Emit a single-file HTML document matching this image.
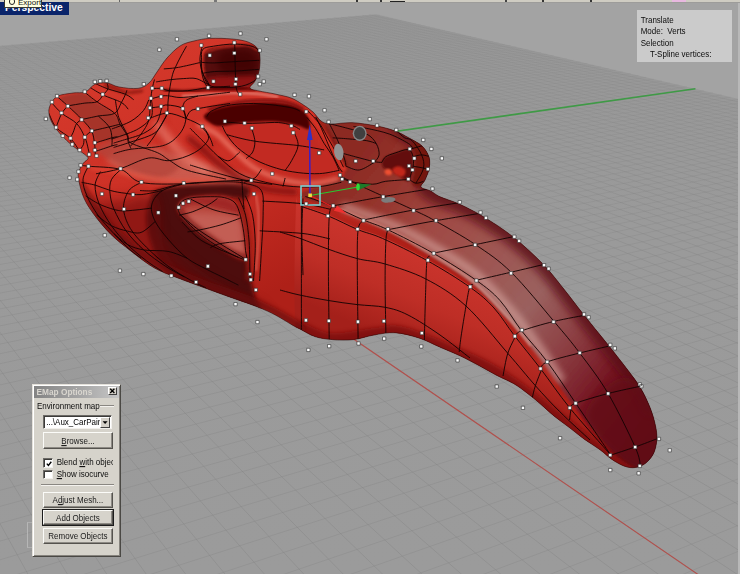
<!DOCTYPE html>
<html><head><meta charset="utf-8"><title>Perspective</title>
<style>
html,body{margin:0;padding:0;background:#a2a2a2;}
body{width:740px;height:574px;overflow:hidden;position:relative;font-family:"Liberation Sans",sans-serif;}
svg{position:absolute;left:0;top:0;display:block}
.abs{position:absolute}
</style></head><body>
<svg width="740" height="574" viewBox="0 0 740 574">
<defs>
<linearGradient id="gplane" x1="0" y1="0" x2="0" y2="574" gradientUnits="userSpaceOnUse">
<stop offset="0.02" stop-color="#979797"/><stop offset="0.4" stop-color="#9a9a9a"/><stop offset="1" stop-color="#9b9b9b"/></linearGradient>
<linearGradient id="gbase" x1="60" y1="60" x2="200" y2="330" gradientUnits="userSpaceOnUse">
<stop offset="0" stop-color="#d63a2c"/><stop offset="0.6" stop-color="#ca2e24"/><stop offset="1" stop-color="#ae2018"/></linearGradient>
<linearGradient id="gline" x1="0" y1="14" x2="0" y2="330" gradientUnits="userSpaceOnUse"><stop offset="0" stop-color="#808080" stop-opacity="0.5"/><stop offset="0.5" stop-color="#808080" stop-opacity="0.8"/><stop offset="1" stop-color="#808080" stop-opacity="1"/></linearGradient>
<linearGradient id="gside" x1="440" y1="262" x2="405" y2="345" gradientUnits="userSpaceOnUse"><stop offset="0" stop-color="#ca342c"/><stop offset="0.5" stop-color="#be2e26"/><stop offset="1" stop-color="#a4201a"/></linearGradient>
<linearGradient id="gdeck" x1="330" y1="190" x2="655" y2="450" gradientUnits="userSpaceOnUse">
<stop offset="0" stop-color="#8c2a24"/><stop offset="0.12" stop-color="#96362e"/><stop offset="0.25" stop-color="#a04a44"/><stop offset="0.4" stop-color="#9e5652"/><stop offset="0.55" stop-color="#9a605e"/><stop offset="0.68" stop-color="#8c3e42"/><stop offset="0.8" stop-color="#761824"/><stop offset="1" stop-color="#5e0814"/></linearGradient>
<filter id="b1" x="-20%" y="-20%" width="140%" height="140%"><feGaussianBlur stdDeviation="1"/></filter>
<filter id="b3" x="-20%" y="-20%" width="140%" height="140%"><feGaussianBlur stdDeviation="3"/></filter>
<filter id="b6" x="-30%" y="-30%" width="160%" height="160%"><feGaussianBlur stdDeviation="6"/></filter>
<filter id="b2" x="-20%" y="-20%" width="140%" height="140%"><feGaussianBlur stdDeviation="2"/></filter>
<filter id="b4" x="-20%" y="-20%" width="140%" height="140%"><feGaussianBlur stdDeviation="4"/></filter>
<clipPath id="carclip"><path d="M57.0 96.5 C60.9 94.2 68.3 93.8 73.0 93.0 C77.7 92.2 81.7 93.5 85.4 92.0 C89.1 90.5 91.4 85.8 95.0 84.3 C98.6 82.8 103.0 82.5 107.0 83.0 C111.0 83.5 113.8 86.1 119.0 87.0 C124.2 87.9 133.0 89.1 138.0 88.4 C143.0 87.7 145.8 85.7 149.0 83.0 C152.2 80.3 154.0 76.2 157.0 72.0 C160.0 67.8 163.1 62.4 167.0 58.0 C170.9 53.6 176.0 48.5 180.5 45.7 C185.0 42.9 189.1 42.2 194.0 41.0 C198.9 39.8 203.7 38.7 210.0 38.4 C216.3 38.1 225.7 38.4 232.0 39.0 C238.3 39.6 243.8 40.4 248.0 42.0 C252.2 43.6 255.5 45.7 257.5 48.4 C259.5 51.1 259.8 54.2 260.0 58.0 C260.2 61.8 259.8 67.2 259.0 71.0 C258.2 74.8 256.5 78.2 255.0 81.0 C253.5 83.8 249.3 86.3 250.0 88.0 C250.7 89.7 254.8 90.0 259.0 91.0 C263.2 92.0 269.7 92.8 275.0 94.0 C280.3 95.2 286.5 96.3 291.0 98.0 C295.5 99.7 298.3 101.7 302.0 104.0 C305.7 106.3 309.8 109.2 313.0 112.0 C316.2 114.8 318.1 119.0 321.0 121.0 C323.9 123.0 325.3 123.7 330.5 124.0 C335.7 124.3 344.3 122.4 352.0 122.7 C359.7 123.0 369.3 124.6 376.5 126.0 C383.7 127.4 389.6 129.0 395.0 131.0 C400.4 133.0 404.5 135.5 409.0 138.0 C413.5 140.5 418.7 142.8 422.0 146.0 C425.3 149.2 427.8 153.2 429.0 157.0 C430.2 160.8 429.7 165.2 429.0 169.0 C428.3 172.8 426.3 177.0 425.0 180.0 C423.7 183.0 420.1 185.2 421.0 187.0 C421.9 188.8 427.3 189.4 430.5 191.0 C433.7 192.6 435.2 194.6 440.0 196.8 C444.8 199.0 451.8 200.7 459.0 204.0 C466.2 207.3 474.0 211.0 483.0 216.5 C492.0 222.0 503.1 228.9 513.0 236.8 C523.0 244.7 534.4 255.3 542.7 263.8 C551.0 272.3 556.3 279.7 563.0 288.0 C569.7 296.3 575.7 304.6 583.0 313.8 C590.3 323.1 599.7 334.3 607.0 343.5 C614.3 352.7 621.4 361.6 627.0 369.0 C632.6 376.4 636.7 381.6 640.5 388.0 C644.3 394.4 647.5 401.3 650.0 407.5 C652.5 413.7 654.3 420.1 655.4 425.4 C656.5 430.6 657.0 434.5 656.8 439.0 C656.6 443.5 655.6 448.6 654.0 452.4 C652.4 456.2 649.7 459.6 647.0 462.0 C644.3 464.4 641.3 466.2 638.0 467.0 C634.7 467.8 631.1 468.1 627.0 467.0 C622.9 465.9 618.0 463.4 613.5 460.5 C609.0 457.6 604.9 453.3 600.0 449.7 C595.1 446.1 589.0 442.6 584.0 439.0 C579.0 435.4 575.0 431.8 570.0 428.0 C565.0 424.2 558.9 420.0 554.0 416.0 C549.1 412.0 545.0 407.8 540.5 404.0 C536.0 400.2 531.5 396.4 527.0 393.0 C522.5 389.6 518.7 386.5 513.5 383.5 C508.3 380.5 501.9 378.1 496.0 375.0 C490.1 371.9 483.9 368.2 478.0 365.0 C472.1 361.8 466.9 359.0 460.5 356.0 C454.1 353.0 446.6 350.0 439.7 347.0 C432.8 344.0 426.4 340.4 419.0 338.0 C411.6 335.6 402.5 333.2 395.0 332.7 C387.5 332.2 380.9 333.9 374.0 335.0 C367.1 336.1 360.4 338.8 353.5 339.6 C346.6 340.4 339.1 340.1 332.7 339.6 C326.3 339.1 320.4 338.4 315.0 336.6 C309.6 334.8 303.7 330.9 300.0 329.0 C296.3 327.1 297.6 328.0 293.0 325.4 C288.4 322.8 279.5 317.0 272.7 313.6 C265.9 310.2 259.7 307.8 252.4 305.0 C245.1 302.2 236.7 299.5 228.8 296.7 C220.9 293.9 213.5 291.1 205.0 288.0 C196.5 284.9 186.4 281.3 178.0 278.0 C169.6 274.7 162.4 272.5 154.5 268.0 C146.6 263.5 138.1 256.7 130.8 251.0 C123.5 245.3 116.7 240.2 110.5 234.0 C104.3 227.8 98.1 220.2 93.6 214.0 C89.1 207.8 86.0 203.0 83.5 197.0 C81.0 191.0 79.1 182.5 78.4 178.0 C77.7 173.5 78.7 172.5 79.5 170.0 C80.3 167.5 82.1 164.9 83.5 163.0 C84.9 161.1 87.8 160.0 88.0 158.6 C88.2 157.2 87.9 157.0 85.0 154.6 C82.1 152.2 75.2 148.1 70.5 144.0 C65.8 139.9 60.4 134.3 57.0 130.0 C53.6 125.7 51.2 121.8 50.0 118.0 C48.8 114.2 48.3 110.6 49.5 107.0 C50.7 103.4 53.1 98.8 57.0 96.5Z"/></clipPath>
</defs>
<rect width="740" height="574" fill="#a3a3a3"/>
<path d="M375.9 14.2 L750.0 101.5 L750 600 L-10 600 L-10.0 46.5Z" fill="url(#gplane)"/>
<path d="M-755.9 111.1L380.0 15.1M-759.2 113.5L384.3 16.1M-762.6 115.9L388.6 17.2M-766.1 118.4L393.0 18.2M-769.6 121.0L397.5 19.2M-773.1 123.6L402.0 20.3M-776.8 126.2L406.6 21.4M-780.5 128.9L411.2 22.4M-784.2 131.6L415.9 23.5M-788.1 134.4L420.6 24.6M-792.0 137.3L425.4 25.7M-796.0 140.2L430.2 26.9M-800.1 143.1L435.1 28.0M-804.2 146.1L440.1 29.2M-808.4 149.2L445.1 30.3M-812.8 152.4L450.2 31.5M-817.2 155.6L455.4 32.7M-821.7 158.8L460.6 34.0M-826.2 162.2L465.8 35.2M-830.9 165.6L471.2 36.4M-835.7 169.0L476.6 37.7M-840.6 172.6L482.1 39.0M-845.6 176.2L487.6 40.3M-850.7 179.9L493.2 41.6M-855.9 183.7L498.9 42.9M-861.3 187.6L504.7 44.3M-866.7 191.6L510.6 45.6M-872.3 195.6L516.5 47.0M-878.0 199.8L522.5 48.4M-883.8 204.0L528.6 49.8M-889.8 208.4L534.7 51.3M-895.9 212.8L541.0 52.7M-902.2 217.4L547.3 54.2M-908.6 222.0L553.8 55.7M-915.2 226.8L560.3 57.2M-922.0 231.7L566.9 58.8M-928.9 236.8L573.6 60.3M-936.0 241.9L580.4 61.9M-943.3 247.2L587.3 63.5M-950.8 252.7L594.3 65.2M-958.5 258.2L601.4 66.8M-966.4 264.0L608.6 68.5M-974.5 269.9L615.9 70.2M-982.8 275.9L623.3 71.9M-991.4 282.2L630.8 73.7M-1000.2 288.6L638.5 75.5M-1009.3 295.2L646.2 77.3M-1018.7 302.0L654.1 79.1M-1028.3 309.0L662.1 81.0M-1038.3 316.2L670.2 82.9M-1048.5 323.7L678.5 84.8M-1059.1 331.3L686.9 86.8M-1070.0 339.3L695.4 88.8M-1081.3 347.5L704.0 90.8M-1092.9 355.9L712.8 92.8M-1104.9 364.7L721.8 94.9M-1117.4 373.7L730.8 97.1M-1130.2 383.1L740.1 99.2M-1143.6 392.7L749.5 101.4M-1157.4 402.8L759.0 103.6M-1171.7 413.2L768.7 105.9M-1186.6 424.0L778.6 108.2M-1202.0 435.2L788.7 110.6M-1218.1 446.9L798.9 112.9M-1234.7 459.0L809.3 115.4M-1252.1 471.6L819.9 117.8M-1270.1 484.7L830.7 120.4M-1289.0 498.4L841.6 122.9M-1308.6 512.7L852.8 125.5M-1329.1 527.6L864.2 128.2M-1350.6 543.2L875.8 130.9M-1373.0 559.5L887.6 133.7M-1396.5 576.5L899.7 136.5M-1421.1 594.4L911.9 139.3M-1447.0 613.2L924.4 142.3M-1474.2 633.0L937.2 145.2M-1502.8 653.7L950.2 148.3M-1532.9 675.6L963.5 151.4M-1564.7 698.7L977.0 154.5M-1598.3 723.1L990.8 157.7M-1633.8 749.0L1004.9 161.0M-1671.5 776.3L1019.3 164.4M-1711.5 805.4L1034.0 167.8M-1754.1 836.4L1049.0 171.3M-1799.5 869.4L1064.3 174.9M-1848.0 904.6L1080.0 178.6M-1899.9 942.3L1095.9 182.3M-1955.6 982.8L1112.3 186.1M-2015.6 1026.4L1129.0 190.0M-2080.3 1073.4L1146.1 194.0M-2150.4 1124.3L1163.6 198.1M-2226.5 1179.6L1181.5 202.3M-2309.4 1239.8L1199.8 206.5M-2400.0 1305.7L1218.5 210.9M-2499.7 1378.1L1237.7 215.4M-2609.7 1458.0L1257.4 220.0M-2731.7 1546.7L1277.6 224.7M-2867.8 1645.6L1298.2 229.5M-3020.7 1756.7L1319.4 234.5M-3193.6 1882.3L1341.1 239.5M-3390.7 2025.5L1363.4 244.7M-3617.5 2190.3L1386.2 250.1M-3881.2 2382.0L1409.7 255.5M-4191.7 2607.6L1433.8 261.2M-4562.7 2877.2L1458.5 266.9" stroke="url(#gline)" stroke-width="0.9" stroke-opacity="0.34" fill="none"/>
<path d="M-300.6 70.9L-4.6 942.9M-288.6 69.9L45.7 920.2M-276.6 68.9L94.0 898.5M-264.7 67.9L140.3 877.6M-252.9 66.9L184.9 857.5M-241.2 65.9L227.8 838.2M-229.7 64.9L269.0 819.6M-218.2 64.0L308.8 801.7M-206.8 63.0L347.1 784.4M-195.5 62.1L384.1 767.8M-184.4 61.1L419.8 751.7M-173.3 60.2L454.3 736.2M-162.3 59.3L487.6 721.1M-151.4 58.4L519.8 706.6M-140.6 57.5L551.0 692.6M-129.8 56.6L581.2 679.0M-119.2 55.7L610.4 665.8M-108.7 54.8L638.7 653.1M-98.2 53.9L666.2 640.7M-87.8 53.0L692.8 628.7M-77.5 52.2L718.7 617.0M-67.3 51.3L743.8 605.7M-57.2 50.5L768.1 594.7M-47.2 49.6L791.8 584.1M-37.2 48.8L814.8 573.7M-27.3 48.0L837.2 563.6M-17.5 47.2L859.0 553.8M-7.8 46.3L880.2 544.3M1.8 45.5L900.9 535.0M11.4 44.7L921.0 525.9M20.9 43.9L940.5 517.1M30.3 43.1L959.6 508.5M39.7 42.4L978.2 500.1M49.0 41.6L996.4 491.9M58.2 40.8L1014.1 484.0M67.3 40.0L1031.3 476.2M76.4 39.3L1048.2 468.6M85.4 38.5L1064.6 461.2M94.3 37.8L1080.7 453.9M103.2 37.0L1096.4 446.8M112.0 36.3L1111.8 439.9M120.7 35.6L1126.8 433.2M129.4 34.8L1141.4 426.6M138.0 34.1L1155.8 420.1M146.5 33.4L1169.8 413.8M155.0 32.7L1183.5 407.6M163.4 32.0L1196.9 401.6M171.7 31.3L1210.1 395.6M180.0 30.6L1223.0 389.8M188.3 29.9L1235.6 384.2M196.4 29.2L1247.9 378.6M204.5 28.5L1260.0 373.1M212.6 27.9L1271.9 367.8M220.6 27.2L1283.5 362.6M228.5 26.5L1294.9 357.4M236.4 25.9L1306.0 352.4M244.2 25.2L1317.0 347.5M252.0 24.6L1327.7 342.6M259.7 23.9L1338.3 337.9M267.4 23.3L1348.6 333.2M275.0 22.6L1358.7 328.6M282.5 22.0L1368.7 324.2M290.0 21.4L1378.5 319.8M297.5 20.8L1388.1 315.4M304.9 20.1L1397.5 311.2M312.2 19.5L1406.8 307.0M319.5 18.9L1415.9 302.9M326.8 18.3L1424.8 298.9M333.9 17.7L1433.6 294.9M341.1 17.1L1442.3 291.0M348.2 16.5L1450.7 287.2M355.2 15.9L1459.1 283.4M362.3 15.3L1467.3 279.7M369.2 14.7L1475.4 276.1" stroke="url(#gline)" stroke-width="0.9" stroke-opacity="0.42" fill="none"/>
<line x1="109.1" y1="172.0" x2="695.4" y2="88.8" stroke="#3f9a46" stroke-width="1.6"/>
<line x1="109.1" y1="172.0" x2="706.1" y2="580.0" stroke="#b2504c" stroke-width="1.1"/>
<g clip-path="url(#carclip)">
<rect x="40" y="30" width="630" height="450" fill="url(#gbase)"/>
<path d="M300.0 196.0 C301.8 199.5 318.5 202.9 328.7 206.8 C338.9 210.8 350.7 215.4 361.0 219.7 C371.3 224.0 378.9 226.8 390.3 232.7 C401.7 238.6 415.6 246.9 429.2 255.4 C442.8 263.9 459.2 272.9 472.2 283.5 C485.2 294.1 499.4 310.9 507.0 318.7 C514.6 326.5 511.5 323.1 517.6 330.5 C523.7 337.9 534.3 350.6 543.5 363.0 C552.7 375.4 564.1 393.5 572.7 405.0 C581.3 416.5 588.0 423.7 595.0 432.0 C602.0 440.3 607.5 448.7 615.0 455.0 C622.5 461.3 631.7 469.2 640.0 470.0 C648.3 470.8 660.8 468.3 665.0 460.0 C669.2 451.7 669.2 435.0 665.0 420.0 C660.8 405.0 650.8 386.7 640.0 370.0 C629.2 353.3 613.3 336.7 600.0 320.0 C586.7 303.3 575.0 285.8 560.0 270.0 C545.0 254.2 525.0 235.8 510.0 225.0 C495.0 214.2 481.7 210.8 470.0 205.0 C458.3 199.2 445.0 199.2 440.0 190.0 C435.0 180.8 443.3 160.0 440.0 150.0 C436.7 140.0 430.0 135.3 420.0 130.0 C410.0 124.7 395.3 120.0 380.0 118.0 C364.7 116.0 336.3 114.3 328.0 118.0 C319.7 121.7 328.7 133.0 330.0 140.0 C331.3 147.0 333.5 154.7 336.0 160.0 C338.5 165.3 344.7 168.7 345.0 172.0 C345.3 175.3 342.5 177.7 338.0 180.0 C333.5 182.3 324.3 183.3 318.0 186.0 C311.7 188.7 298.2 192.5 300.0 196.0Z" fill="url(#gdeck)" filter="url(#b1)" opacity="1" />
<path d="M400.0 128.0 C404.2 131.3 419.8 141.0 425.0 148.0 C430.2 155.0 431.0 163.7 431.0 170.0 C431.0 176.3 423.5 181.5 425.0 186.0 C426.5 190.5 434.3 193.8 440.0 196.8 C445.7 199.8 451.8 200.7 459.0 204.0 C466.2 207.3 474.0 211.0 483.0 216.5 C492.0 222.0 503.1 228.9 513.0 236.8 C523.0 244.7 534.4 255.3 542.7 263.8 C551.0 272.3 556.3 279.7 563.0 288.0 C569.7 296.3 575.7 304.6 583.0 313.8 C590.3 323.1 599.7 334.3 607.0 343.5 C614.3 352.7 621.4 361.6 627.0 369.0 C632.6 376.4 636.7 381.6 640.5 388.0 C644.3 394.4 648.4 404.2 650.0 407.5" fill="none" stroke="#5a0a14" stroke-width="18" stroke-linecap="round" filter="url(#b4)" opacity="0.8"/>
<path d="M345.0 207.0 C353.3 210.2 379.8 219.2 395.0 226.0 C410.2 232.8 422.2 239.7 436.0 248.0 C449.8 256.3 465.3 265.3 478.0 276.0 C490.7 286.7 502.0 300.3 512.0 312.0 C522.0 323.7 530.0 335.0 538.0 346.0 C546.0 357.0 556.3 372.7 560.0 378.0" fill="none" stroke="#d8a8a2" stroke-width="9" stroke-linecap="round" filter="url(#b3)" opacity="0.6"/>
<path d="M340.0 209.5 C348.3 213.0 374.8 223.2 390.0 230.5 C405.2 237.8 417.2 245.0 431.0 253.5 C444.8 262.0 460.5 271.2 473.0 281.5 C485.5 291.8 496.5 304.4 506.0 315.0 C515.5 325.6 526.0 340.0 530.0 345.0" fill="none" stroke="#e8a89c" stroke-width="2.5" stroke-linecap="round" filter="url(#b1)" opacity="0.55"/>
<path d="M585.0 415.0 C584.5 427.0 602.8 442.8 612.0 452.0 C621.2 461.2 631.2 468.7 640.0 470.0 C648.8 471.3 661.3 467.5 665.0 460.0 C668.7 452.5 666.2 437.5 662.0 425.0 C657.8 412.5 647.8 392.5 640.0 385.0 C632.2 377.5 624.2 375.0 615.0 380.0 C605.8 385.0 585.5 403.0 585.0 415.0Z" fill="#620814" filter="url(#b4)" opacity="0.75" />
<path d="M300.0 205.0 C305.4 206.6 318.7 210.6 328.4 214.5 C338.1 218.4 349.1 224.4 358.1 228.2 C367.1 231.9 370.9 231.9 382.4 237.0 C393.9 242.1 412.4 250.9 427.0 259.0 C441.6 267.1 458.5 277.6 469.7 285.5 C480.9 293.4 486.5 298.3 494.0 306.5 C501.5 314.7 507.1 324.6 514.9 334.7 C522.6 344.8 531.4 355.2 540.5 367.2 C549.6 379.2 559.8 393.9 569.7 406.5 C579.6 419.1 592.3 433.8 600.0 443.0 C607.7 452.2 616.0 460.5 616.0 462.0 C616.0 463.5 607.7 457.3 600.0 452.0 C592.3 446.7 580.0 437.7 570.0 430.0 C560.0 422.3 549.5 413.5 540.0 406.0 C530.5 398.5 523.3 391.5 513.0 385.0 C502.7 378.5 490.2 373.0 478.0 367.0 C465.8 361.0 449.8 353.5 440.0 349.0 C430.2 344.5 426.5 342.3 419.0 340.0 C411.5 337.7 402.5 335.5 395.0 335.0 C387.5 334.5 381.0 335.8 374.0 337.0 C367.0 338.2 360.0 341.2 353.0 342.0 C346.0 342.8 338.3 342.5 332.0 342.0 C325.7 341.5 321.0 341.2 315.0 339.0 C309.0 336.8 299.2 351.3 296.0 329.0 C292.8 306.7 295.3 225.7 296.0 205.0 C296.7 184.3 294.6 203.4 300.0 205.0Z" fill="url(#gside)" opacity="1" />
<path d="M300.0 322.0 C305.0 321.2 317.5 332.0 330.0 333.0 C342.5 334.0 363.3 329.2 375.0 328.0 C386.7 326.8 389.2 324.0 400.0 326.0 C410.8 328.0 423.3 333.0 440.0 340.0 C456.7 347.0 480.0 356.0 500.0 368.0 C520.0 380.0 540.8 397.5 560.0 412.0 C579.2 426.5 601.7 444.5 615.0 455.0 C628.3 465.5 642.5 472.5 640.0 475.0 C637.5 477.5 616.7 480.0 600.0 470.0 C583.3 460.0 560.0 430.8 540.0 415.0 C520.0 399.2 500.0 386.7 480.0 375.0 C460.0 363.3 434.2 350.8 420.0 345.0 C405.8 339.2 406.7 339.8 395.0 340.0 C383.3 340.2 365.8 346.3 350.0 346.0 C334.2 345.7 308.3 342.0 300.0 338.0 C291.7 334.0 295.0 322.8 300.0 322.0Z" fill="#7a0c0c" filter="url(#b2)" opacity="0.8" />
<path d="M150.0 200.0 C151.8 195.3 152.0 192.4 157.0 190.0 C162.0 187.6 171.0 186.6 180.0 185.5 C189.0 184.4 201.0 183.8 211.0 183.5 C221.0 183.2 233.5 182.6 240.0 183.5 C246.5 184.4 249.0 186.4 250.0 189.0 C251.0 191.6 248.4 197.4 246.0 199.0 C243.6 200.6 239.9 199.0 235.4 198.4 C230.9 197.8 225.5 195.9 219.2 195.7 C212.9 195.5 203.5 196.1 197.6 197.0 C191.7 197.9 187.2 199.3 184.0 201.0 C180.8 202.7 178.5 205.0 178.1 207.0 C177.7 209.0 179.3 210.8 181.4 213.2 C183.5 215.6 186.8 217.8 190.8 221.4 C194.9 225.0 200.5 230.6 205.7 234.9 C210.9 239.2 216.5 243.2 221.9 247.0 C227.3 250.8 233.9 255.6 238.1 257.8 C242.2 260.1 244.8 257.6 246.8 260.5 C248.8 263.4 248.5 268.4 250.0 275.0 C251.5 281.6 254.0 293.7 256.0 300.0 C258.0 306.3 264.7 312.0 262.0 313.0 C259.3 314.0 249.5 309.7 240.0 306.0 C230.5 302.3 215.3 295.3 205.0 291.0 C194.7 286.7 185.5 284.7 178.0 280.0 C170.5 275.3 164.7 269.7 160.0 263.0 C155.3 256.3 152.3 247.5 150.0 240.0 C147.7 232.5 146.0 224.7 146.0 218.0 C146.0 211.3 148.2 204.7 150.0 200.0Z" fill="#4e0707" filter="url(#b2)" opacity="1" />
<path d="M177.8 208.1 C178.2 206.0 179.7 202.8 182.2 201.1 C184.7 199.3 188.1 198.3 192.8 197.6 C197.5 196.9 205.1 196.7 210.4 196.7 C215.7 196.7 220.3 196.6 224.4 197.6 C228.5 198.6 232.3 200.0 235.0 202.9 C237.7 205.8 238.8 210.2 240.3 215.2 C241.8 220.2 242.9 226.9 243.8 232.8 C244.7 238.7 245.1 246.0 245.5 250.4 C245.9 254.8 247.6 258.0 246.4 259.2 C245.2 260.4 242.2 258.9 238.5 257.4 C234.8 255.9 229.1 253.0 224.4 250.4 C219.7 247.8 215.1 244.8 210.4 241.6 C205.7 238.4 200.4 234.5 196.3 231.0 C192.2 227.5 188.5 223.4 185.7 220.5 C182.9 217.6 180.9 215.5 179.6 213.4 C178.3 211.3 177.4 210.2 177.8 208.1Z" fill="#b8463e" filter="url(#b1)" opacity="1" />
<path d="M182.2 201.1 C184.0 199.3 188.1 198.3 192.8 197.6 C197.5 196.9 205.1 196.7 210.4 196.7 C215.6 196.7 220.3 196.6 224.4 197.6 C228.5 198.6 232.5 200.2 235.0 202.9 C237.5 205.5 241.1 212.2 239.4 213.4 C237.6 214.6 229.3 211.1 224.4 209.9 C219.6 208.7 215.6 207.3 210.4 206.4 C205.1 205.5 197.5 204.3 192.8 204.6 C188.1 204.9 184.0 208.7 182.2 208.1 C180.5 207.6 180.5 202.9 182.2 201.1Z" fill="#9c2420" filter="url(#b2)" opacity="0.85" />
<path d="M185.7 215.2 C187.8 212.5 201.6 212.8 210.4 213.4 C219.2 214.0 233.1 214.6 238.5 218.7 C243.9 222.8 241.9 232.2 242.9 238.0 C243.9 243.9 246.6 251.8 244.7 253.9 C242.8 255.9 236.6 252.7 231.5 250.4 C226.3 248.0 219.4 243.3 213.9 239.8 C208.3 236.3 202.7 233.4 198.0 229.3 C193.4 225.1 183.7 217.8 185.7 215.2Z" fill="#c8685e" filter="url(#b3)" opacity="0.7" />
<path d="M177.8 209.0 C177.7 210.2 179.0 213.0 180.5 215.2 C181.9 217.4 183.8 219.3 186.6 222.2 C189.4 225.1 193.1 229.3 197.2 232.8 C201.3 236.3 206.5 240.1 211.2 243.3 C215.9 246.5 220.8 249.6 225.3 252.1 C229.9 254.6 235.0 257.0 238.5 258.3 C242.0 259.6 245.2 260.5 246.4 260.0 C247.6 259.6 248.0 257.4 245.5 255.6 C243.0 253.9 236.5 252.3 231.5 249.5 C226.5 246.7 220.9 242.6 215.6 238.9 C210.4 235.3 204.5 231.2 199.8 227.5 C195.1 223.8 190.6 220.2 187.5 216.9 C184.4 213.7 182.9 209.5 181.3 208.1 C179.7 206.8 178.0 207.9 177.8 209.0Z" fill="#6a0e0c" filter="url(#b2)" opacity="0.75" />
<path d="M235.9 197.6 C236.5 196.1 241.0 198.2 242.9 201.1 C244.8 204.0 246.0 209.0 247.3 215.2 C248.6 221.3 250.1 230.7 250.8 238.0 C251.6 245.4 251.7 252.4 251.7 259.2 C251.7 265.9 251.8 275.3 250.8 278.5 C249.8 281.7 246.2 281.7 245.5 278.5 C244.9 275.3 246.9 265.3 246.9 259.2 C246.9 253.0 246.2 247.4 245.5 241.6 C244.9 235.7 243.9 229.3 242.9 224.0 C241.9 218.7 240.6 214.3 239.4 209.9 C238.2 205.5 235.3 199.1 235.9 197.6Z" fill="#84140f" filter="url(#b2)" opacity="0.75" />
<path d="M256.0 196.0 C256.4 199.2 258.2 206.8 258.5 215.0 C258.8 223.2 258.4 235.8 258.0 245.0 C257.6 254.2 256.3 265.8 256.0 270.0" fill="none" stroke="#ec8070" stroke-width="2.4" stroke-linecap="round" filter="url(#b1)" opacity="0.5"/>
<path d="M106.5 158.0 C108.3 154.6 121.8 151.8 131.1 150.1 C140.5 148.3 153.4 146.1 162.8 147.5 C172.2 148.8 176.8 154.2 187.4 158.0 C197.9 161.8 214.9 167.1 226.1 170.3 C237.2 173.5 249.5 175.0 254.2 177.3 C258.9 179.7 258.9 183.5 254.2 184.4 C249.5 185.2 236.0 182.7 226.1 182.6 C216.1 182.5 204.4 183.5 194.4 183.5 C184.5 183.5 175.1 183.3 166.3 182.6 C157.5 181.9 149.3 181.1 141.7 179.1 C134.1 177.0 126.5 173.8 120.6 170.3 C114.7 166.8 104.8 161.4 106.5 158.0Z" fill="#cc7466" filter="url(#b3)" opacity="0.62" />
<path d="M162.8 115.8 C164.0 112.6 166.2 114.4 166.3 117.6 C166.4 120.8 162.8 130.2 163.7 135.1 C164.5 140.1 165.3 145.4 171.6 147.5 C177.9 149.5 194.7 148.8 201.4 147.5 C208.2 146.1 209.4 140.4 212.0 139.5 C214.6 138.7 218.4 140.0 217.3 142.2 C216.1 144.4 212.9 151.0 205.0 152.7 C197.1 154.5 177.4 155.4 169.8 152.7 C162.2 150.1 160.4 143.1 159.3 136.9 C158.1 130.8 161.6 119.0 162.8 115.8Z" fill="#b01c14" filter="url(#b3)" opacity="0.5" />
<path d="M92.0 212.0 C95.3 206.8 114.0 205.3 125.0 203.0 C136.0 200.7 151.3 190.2 158.0 198.0 C164.7 205.8 158.0 235.5 165.0 250.0 C172.0 264.5 183.8 274.7 200.0 285.0 C216.2 295.3 255.3 308.7 262.0 312.0 C268.7 315.3 254.0 310.3 240.0 305.0 C226.0 299.7 196.3 288.7 178.0 280.0 C159.7 271.3 142.2 260.7 130.0 253.0 C117.8 245.3 111.3 240.8 105.0 234.0 C98.7 227.2 88.7 217.2 92.0 212.0Z" fill="#6e0c08" filter="url(#b4)" opacity="0.42" />
<path d="M88.0 200.0 C90.0 193.3 109.7 196.7 120.0 196.0 C130.3 195.3 143.3 190.3 150.0 196.0 C156.7 201.7 151.7 217.7 160.0 230.0 C168.3 242.3 183.0 257.5 200.0 270.0 C217.0 282.5 251.7 297.3 262.0 305.0 C272.3 312.7 271.5 318.2 262.0 316.0 C252.5 313.8 223.7 300.0 205.0 292.0 C186.3 284.0 166.2 277.3 150.0 268.0 C133.8 258.7 118.3 247.3 108.0 236.0 C97.7 224.7 86.0 206.7 88.0 200.0Z" fill="#701008" filter="url(#b6)" opacity="0.35" />
<path d="M80.0 180.0 C79.2 181.7 85.0 200.7 90.0 210.0 C95.0 219.3 100.0 226.7 110.0 236.0 C120.0 245.3 134.2 257.0 150.0 266.0 C165.8 275.0 186.7 283.0 205.0 290.0 C223.3 297.0 244.2 301.2 260.0 308.0 C275.8 314.8 293.3 328.7 300.0 331.0 C306.7 333.3 307.5 327.5 300.0 322.0 C292.5 316.5 271.7 305.3 255.0 298.0 C238.3 290.7 217.5 285.3 200.0 278.0 C182.5 270.7 164.2 262.7 150.0 254.0 C135.8 245.3 124.2 235.0 115.0 226.0 C105.8 217.0 100.8 207.7 95.0 200.0 C89.2 192.3 80.8 178.3 80.0 180.0Z" fill="#6a0a08" filter="url(#b2)" opacity="0.7" />
<path d="M60.5 97.7 C63.1 95.6 77.3 92.6 83.2 93.4 C89.2 94.1 91.2 99.1 96.2 102.4 C101.3 105.7 108.5 107.8 113.5 113.2 C118.6 118.6 129.0 130.2 126.5 134.9 C124.0 139.5 104.1 142.1 98.4 141.4 C92.6 140.6 94.8 134.3 91.9 130.5 C89.0 126.8 85.0 122.8 81.1 118.6 C77.1 114.5 71.5 109.2 68.1 105.7 C64.7 102.2 58.0 99.7 60.5 97.7Z" fill="#a2362c" filter="url(#b1)" opacity="0.92" />
<path d="M100.5 144.6 C105.6 142.1 120.0 137.1 128.6 138.1 C137.3 139.1 144.1 145.9 152.4 150.4 C160.7 155.0 176.9 161.0 178.4 165.6 C179.8 170.2 168.3 177.1 161.1 178.1 C153.9 179.1 143.1 174.5 135.1 171.6 C127.2 168.7 119.6 163.9 113.5 160.8 C107.4 157.7 100.5 155.9 98.4 153.2 C96.2 150.5 95.5 147.1 100.5 144.6Z" fill="#b4443a" filter="url(#b2)" opacity="0.8" />
<path d="M104.9 83.0 C106.5 82.7 111.0 84.3 114.6 85.6 C118.2 86.8 122.0 89.9 126.5 90.5 C131.0 91.2 139.1 89.1 141.6 89.5 C144.1 89.8 144.1 91.9 141.6 92.7 C139.1 93.5 131.2 94.6 126.5 94.2 C121.8 93.9 117.1 91.7 113.5 90.5 C109.9 89.4 106.3 88.6 104.9 87.3 C103.4 86.0 103.2 83.3 104.9 83.0Z" fill="#8a1810" filter="url(#b1)" opacity="0.7" />
<path d="M204.0 116.0 C203.3 112.1 211.3 110.5 218.0 108.5 C224.7 106.5 234.2 104.9 244.0 104.0 C253.8 103.1 267.5 102.4 276.5 103.0 C285.5 103.6 292.8 105.2 298.0 107.5 C303.2 109.8 305.7 113.2 308.0 117.0 C310.3 120.8 309.3 124.5 312.0 130.0 C314.7 135.5 319.8 144.5 324.0 150.0 C328.2 155.5 334.3 159.5 337.0 163.0 C339.7 166.5 342.8 169.2 340.0 171.0 C337.2 172.8 327.0 173.7 320.0 174.0 C313.0 174.3 305.3 174.0 298.0 173.0 C290.7 172.0 283.2 170.2 276.0 168.0 C268.8 165.8 261.5 163.3 255.0 160.0 C248.5 156.7 242.5 152.7 237.0 148.0 C231.5 143.3 227.5 137.3 222.0 132.0 C216.5 126.7 204.7 119.9 204.0 116.0Z" fill="#c22a24" filter="url(#b1)" opacity="1" />
<path d="M204.0 116.0 C205.0 113.4 211.3 110.5 218.0 108.5 C224.7 106.5 234.2 104.9 244.0 104.0 C253.8 103.1 267.5 102.4 276.5 103.0 C285.5 103.6 292.8 105.2 298.0 107.5 C303.2 109.8 306.2 113.4 308.0 117.0 C309.8 120.6 310.7 127.6 309.0 129.0 C307.3 130.4 303.4 126.8 298.0 125.5 C292.6 124.2 285.5 122.0 276.5 121.5 C267.5 121.0 253.1 121.8 244.0 122.5 C234.9 123.2 227.3 125.8 222.0 126.0 C216.7 126.2 215.0 125.7 212.0 124.0 C209.0 122.3 203.0 118.6 204.0 116.0Z" fill="#4c0505" filter="url(#b1)" opacity="1" />
<path d="M205.4 52.0 C208.5 47.7 216.0 47.8 223.0 46.5 C230.0 45.2 241.6 43.8 247.6 44.5 C253.6 45.2 256.9 47.5 259.0 51.0 C261.1 54.5 260.9 60.5 260.5 65.2 C260.1 69.9 258.8 75.5 256.4 79.3 C254.0 83.1 251.6 86.2 246.0 88.0 C240.4 89.8 229.2 90.3 223.0 90.0 C216.8 89.7 212.1 89.3 209.0 86.3 C205.9 83.3 205.3 77.9 204.7 72.2 C204.1 66.5 202.3 56.3 205.4 52.0Z" fill="#560707" filter="url(#b1)" opacity="1" />
<path d="M208.0 78.0 C214.8 76.0 242.0 74.5 250.0 75.0 C258.0 75.5 256.7 78.7 256.0 81.0 C255.3 83.3 251.5 87.3 246.0 89.0 C240.5 90.7 229.2 91.3 223.0 91.0 C216.8 90.7 211.5 89.2 209.0 87.0 C206.5 84.8 201.2 80.0 208.0 78.0Z" fill="#a01616" filter="url(#b2)" opacity="0.75" />
<path d="M222.0 52.0 C226.7 49.3 240.3 49.3 246.0 50.0 C251.7 50.7 254.2 53.0 256.0 56.0 C257.8 59.0 258.0 65.0 257.0 68.0 C256.0 71.0 254.8 73.0 250.0 74.0 C245.2 75.0 233.3 75.3 228.0 74.0 C222.7 72.7 219.0 69.7 218.0 66.0 C217.0 62.3 217.3 54.7 222.0 52.0Z" fill="#3c0404" filter="url(#b3)" opacity="0.7" />
<path d="M206.0 52.0 C208.8 51.2 216.2 48.6 223.0 47.5 C229.8 46.4 241.3 45.1 247.0 45.5 C252.7 45.9 255.3 49.2 257.0 50.0" fill="none" stroke="#d83428" stroke-width="1.6" stroke-linecap="round" filter="url(#b1)" opacity="0.8"/>
<path d="M412.2 140.7 C413.6 138.8 420.5 142.7 423.5 145.4 C426.5 148.1 429.2 152.7 430.1 156.8 C431.1 160.9 430.3 165.9 429.2 170.0 C428.1 174.1 425.1 178.5 423.5 181.3 C421.9 184.2 421.6 186.7 419.7 187.0 C417.8 187.3 413.1 185.8 412.2 183.2 C411.2 180.7 413.6 176.3 414.0 171.9 C414.5 167.5 415.3 162.0 415.0 156.8 C414.7 151.6 410.7 142.6 412.2 140.7Z" fill="#741410" filter="url(#b1)" opacity="1" />
<path d="M381.9 162.4 C382.2 160.5 383.5 158.3 385.7 156.8 C387.9 155.2 391.3 154.2 395.1 153.0 C398.9 151.8 405.4 148.9 408.4 149.6 C411.4 150.2 412.5 153.0 413.1 156.8 C413.7 160.5 412.9 167.8 412.2 171.9 C411.4 176.0 410.6 180.7 408.4 181.3 C406.2 182.0 402.1 177.6 398.9 175.7 C395.8 173.8 392.0 171.3 389.5 170.0 C386.9 168.7 385.0 169.4 383.8 168.1 C382.5 166.8 381.6 164.3 381.9 162.4Z" fill="#640a07" filter="url(#b1)" opacity="1" />
<path d="M384.7 170.4 C385.4 169.5 388.2 168.6 389.5 169.1 C390.7 169.5 392.3 171.8 392.3 172.8 C392.3 173.9 390.6 175.1 389.5 175.3 C388.4 175.5 386.5 175.0 385.7 174.2 C384.9 173.3 384.1 171.2 384.7 170.4Z" fill="#ee5030" filter="url(#b1)" opacity="1" />
<path d="M392.3 169.1 C392.9 167.7 396.7 166.0 398.9 166.2 C401.1 166.4 404.9 168.6 405.5 170.4 C406.2 172.1 404.4 176.0 402.7 176.6 C401.0 177.2 396.9 175.4 395.1 174.2 C393.4 172.9 391.7 170.4 392.3 169.1Z" fill="#cc2a1e" filter="url(#b1)" opacity="0.9" />
<path d="M190.0 139.1 C192.2 140.9 197.9 145.5 203.0 149.9 C208.0 154.2 213.8 160.0 220.3 165.0 C226.8 170.0 234.3 176.2 241.9 180.1 C249.5 184.1 257.0 186.8 265.7 188.8 C274.3 190.8 289.1 191.5 293.8 192.0" fill="none" stroke="#7e100c" stroke-width="7" stroke-linecap="round" filter="url(#b2)" opacity="0.7"/>
<path d="M198.6 125.0 C201.5 126.4 210.2 129.5 215.9 133.6 C221.7 137.8 226.8 144.1 233.2 149.9 C239.7 155.6 246.9 163.4 254.9 168.2 C262.8 173.1 271.4 176.5 280.8 179.1 C290.2 181.6 301.7 183.4 311.1 183.4 C320.5 183.4 332.7 179.8 337.0 179.1" fill="none" stroke="#f48a78" stroke-width="4" stroke-linecap="round" filter="url(#b2)" opacity="0.75"/>
<path d="M209.5 109.2 C215.2 107.9 231.8 102.7 244.1 101.4 C256.3 100.1 273.2 100.3 283.0 101.4 C292.7 102.6 299.2 107.2 302.4 108.4" fill="none" stroke="#7a0e0c" stroke-width="3.5" stroke-linecap="round" filter="url(#b1)" opacity="0.8"/>
<path d="M308.5 112.0 C310.4 114.2 316.4 120.3 319.7 125.0 C323.0 129.7 325.5 135.1 328.4 140.1 C331.3 145.2 334.4 150.6 337.0 155.3 C339.6 160.0 342.8 166.1 343.9 168.2" fill="none" stroke="#d83626" stroke-width="5.5" stroke-linecap="round" filter="url(#b1)" opacity="0.95"/>
<path d="M316.5 117.4 C318.3 119.8 323.9 126.4 327.3 131.5 C330.7 136.5 333.9 142.1 337.0 147.7 C340.2 153.3 344.6 162.1 346.1 165.0" fill="none" stroke="#7a1410" stroke-width="3" stroke-linecap="round" filter="url(#b1)" opacity="0.7"/>
<path d="M158.0 125.0 C161.3 129.2 170.2 142.5 178.0 150.0 C185.8 157.5 200.5 166.7 205.0 170.0" fill="none" stroke="#f09080" stroke-width="9" stroke-linecap="round" filter="url(#b3)" opacity="0.55"/>
<path d="M165.0 90.4 C168.7 90.6 180.0 91.4 187.5 91.2 C195.0 91.0 202.7 89.7 210.0 89.2 C217.2 88.7 223.4 88.2 230.9 88.2 C238.4 88.2 250.9 89.1 254.9 89.2" fill="none" stroke="#5a0606" stroke-width="3.2" stroke-linecap="round" filter="url(#b1)" opacity="0.85"/>
<path d="M183.0 96.0 C186.5 95.8 196.1 95.3 204.0 94.8 C211.8 94.3 221.5 93.2 230.0 93.0 C238.5 92.8 247.0 93.1 254.9 93.7 C262.8 94.4 273.7 96.2 277.4 96.7" fill="none" stroke="#ea9488" stroke-width="2.6" stroke-linecap="round" filter="url(#b1)" opacity="0.7"/>
<path d="M92.0 168.0 C96.7 168.7 110.3 170.3 120.0 172.0 C129.7 173.7 140.0 176.5 150.0 178.0 C160.0 179.5 169.2 180.7 180.0 181.0 C190.8 181.3 209.2 180.2 215.0 180.0" fill="none" stroke="#f45a44" stroke-width="3" stroke-linecap="round" filter="url(#b2)" opacity="0.6"/>
</g>
<g clip-path="url(#carclip)"><path d="M51.5 102.5 C53.2 104.3 57.5 109.8 61.7 113.3 C65.9 116.8 72.8 119.6 76.6 123.5 C80.5 127.5 82.8 132.9 84.8 137.1 C86.7 141.3 87.4 145.5 88.2 148.7 C89.0 151.8 89.3 154.8 89.5 156.0 M56.9 96.3 C58.7 97.9 63.6 102.0 67.8 105.9 C72.0 109.7 78.1 115.3 82.0 119.4 C86.0 123.6 89.5 127.0 91.6 131.0 C93.6 135.0 93.9 139.1 94.5 143.2 C95.2 147.4 95.2 153.9 95.4 156.0 M48.8 113.3 C50.0 115.7 52.6 123.4 56.2 127.6 C59.9 131.8 66.6 134.6 70.5 138.5 C74.3 142.3 77.9 148.7 79.3 150.7 M67.8 105.9 C66.8 107.1 63.6 110.0 61.7 113.6 C59.7 117.2 56.9 125.3 56.0 127.6 M82.0 119.4 C81.1 120.1 78.1 121.4 76.6 123.5 C75.1 125.7 74.2 129.9 73.2 132.3 C72.2 134.8 70.7 136.4 70.5 138.5 C70.3 140.5 71.6 143.6 71.9 144.6 M91.6 131.0 C90.4 132.0 86.1 134.8 84.8 137.1 C83.4 139.4 84.3 142.3 83.4 144.6 C82.5 146.8 80.0 149.7 79.3 150.7 M67.8 105.9 C70.6 105.4 79.9 103.8 84.8 103.1 C89.6 102.5 93.9 103.1 97.0 101.8 C100.0 100.4 101.3 97.1 103.1 95.0 C104.9 92.8 107.2 90.8 107.9 88.9 C108.5 86.9 107.3 84.3 107.2 83.4 M82.0 119.4 C84.8 118.9 92.9 117.1 98.3 116.0 C103.8 115.0 110.8 115.6 114.7 113.3 C118.5 111.1 119.6 105.6 121.4 102.5 C123.3 99.3 124.6 96.3 125.5 94.3 C126.4 92.3 126.7 90.9 126.9 90.2 M91.6 131.0 C94.5 130.3 104.5 128.0 109.2 126.9 C114.0 125.8 118.3 124.6 120.1 124.2 M94.5 143.2 C97.4 142.3 108.1 138.9 111.9 137.8 C115.7 136.7 116.5 136.9 117.4 136.7 M95.4 151.4 C98.1 150.5 108.3 147.1 111.9 145.9 C115.6 144.8 116.5 144.8 117.4 144.6 M84.8 92.3 C86.8 93.9 92.0 98.3 97.0 101.8 C102.0 105.3 110.8 109.6 114.7 113.3 C118.5 117.1 118.0 120.6 120.1 124.2 C122.1 127.8 125.5 132.1 126.9 135.1 C128.2 138.0 127.6 139.6 128.2 141.9 C128.9 144.1 130.5 147.5 131.0 148.7 M98.3 116.0 C100.2 117.9 107.0 123.3 109.2 126.9 C111.5 130.5 111.5 134.6 111.9 137.8 C112.4 141.0 111.9 144.6 111.9 145.9 M90.2 87.5 C92.3 88.8 97.9 92.5 103.1 95.0 C108.3 97.5 117.3 100.1 121.4 102.5 C125.6 104.8 127.1 108.1 128.2 109.2 M95.6 83.7 C97.7 84.6 102.9 87.1 107.9 88.9 C112.8 90.6 121.2 92.5 125.5 94.3 C129.8 96.1 132.3 98.8 133.7 99.7 M202.7 49.5 C204.7 47.1 208.1 47.1 213.5 46.2 C218.9 45.3 228.3 43.9 235.1 44.1 C242.0 44.2 250.5 45.3 254.6 47.3 C258.7 49.3 259.1 52.3 260.0 55.9 C260.9 59.5 260.7 65.0 260.0 68.9 C259.3 72.9 258.7 76.8 255.7 79.7 C252.6 82.6 247.2 85.0 241.6 86.2 C236.0 87.5 227.6 87.5 222.2 87.3 C216.8 87.1 212.4 87.5 209.2 85.1 C205.9 82.8 204.0 77.4 202.7 73.2 C201.4 69.1 201.6 64.2 201.6 60.3 C201.6 56.3 200.7 51.8 202.7 49.5Z M234.7 43.0 C234.8 46.2 234.9 55.0 235.1 62.4 C235.4 69.8 235.5 81.9 236.2 87.3 C236.9 92.7 238.9 93.6 239.5 94.9 M202.1 62.4 C204.1 62.5 209.1 63.0 214.6 62.9 C220.1 62.7 227.7 62.0 235.1 61.6 C242.6 61.1 255.3 60.5 259.4 60.3 M202.7 73.2 C204.7 73.0 209.2 71.9 214.6 71.5 C220.0 71.2 227.7 71.4 235.1 71.1 C242.5 70.7 255.0 69.6 258.9 69.4 M202.7 44.7 C202.3 46.2 201.0 50.8 200.5 53.8 C200.1 56.7 199.7 59.2 200.1 62.4 C200.5 65.7 201.2 69.5 202.7 73.2 C204.2 77.0 208.5 82.4 209.2 85.1 C209.9 87.8 207.4 88.7 207.0 89.5 M163.8 68.9 C165.8 68.7 171.9 68.4 175.7 67.8 C179.5 67.3 182.3 66.6 186.5 65.7 C190.6 64.8 198.2 63.0 200.5 62.4 M156.2 81.9 C158.6 81.5 165.8 80.3 170.3 79.7 C174.8 79.2 178.9 78.8 183.2 78.6 C187.6 78.5 191.9 77.6 196.2 78.6 C200.5 79.7 207.0 84.1 209.2 85.1 M207.0 116.5 C207.7 115.6 208.1 112.9 211.4 111.1 C214.6 109.3 220.4 106.9 226.5 105.7 C232.6 104.4 240.9 103.7 248.1 103.5 C255.3 103.3 262.5 103.9 269.7 104.6 C276.9 105.3 286.3 106.8 291.4 107.8 C296.4 108.9 298.6 110.5 300.0 111.1 M224.3 121.9 C227.6 122.1 237.7 123.2 243.8 123.4 C249.9 123.6 255.3 123.1 261.1 123.0 C266.8 122.8 273.3 122.2 278.4 122.5 C283.4 122.9 287.7 124.0 291.4 125.1 C295.0 126.3 298.6 128.7 300.0 129.5 M154.5 79.5 C154.1 81.0 152.9 85.2 152.2 88.5 C151.6 91.7 151.1 95.7 150.7 99.0 C150.4 102.2 150.2 104.7 150.0 108.0 C149.7 111.2 150.0 115.2 149.2 118.5 C148.5 121.7 147.4 124.2 145.5 127.5 C143.6 130.7 140.5 134.9 138.0 138.0 C135.5 141.1 131.7 144.7 130.5 146.1 M186.5 46.2 C185.6 47.8 182.8 52.7 181.0 56.0 C179.3 59.3 177.4 62.9 176.0 66.0 C174.6 69.1 173.6 70.7 172.5 74.7 C171.4 78.7 170.2 85.4 169.5 90.0 C168.7 94.5 168.4 98.1 168.0 102.0 C167.6 105.9 168.5 109.2 167.2 113.2 C166.0 117.2 162.9 121.8 160.5 126.0 C158.1 130.1 155.2 134.6 153.0 138.0 C150.7 141.3 148.0 144.7 147.0 146.1 M152.2 88.5 C153.9 88.5 159.1 88.1 162.0 88.5 C164.9 88.9 165.2 90.4 169.5 90.7 C173.7 91.1 181.1 91.2 187.5 90.7 C193.8 90.2 200.6 88.5 207.7 87.7 C214.8 87.0 226.3 86.5 230.0 86.2 M150.7 99.0 C152.6 98.5 158.9 96.5 162.0 96.0 C165.1 95.5 166.5 95.7 169.5 96.0 C172.5 96.2 175.2 97.5 180.0 97.5 C184.7 97.5 191.7 96.6 198.0 96.0 C204.2 95.4 212.1 94.4 217.5 93.7 C222.8 93.1 227.9 92.5 230.0 92.2 M150.0 108.0 C151.9 107.7 158.4 107.0 161.2 106.5 C164.1 106.0 163.7 104.7 167.2 105.0 C170.7 105.3 179.1 106.0 182.2 108.3 C185.3 110.5 185.3 116.8 186.0 118.5 M149.2 118.5 C152.2 117.6 161.1 113.2 167.2 113.2 C173.3 113.2 180.1 116.2 186.0 118.5 C191.8 120.7 198.5 123.5 202.5 126.7 C206.5 130.0 208.2 134.7 210.0 138.0 C211.7 141.2 212.5 144.7 213.0 146.1 M186.0 118.5 C186.7 117.2 188.5 112.6 190.5 111.0 C192.5 109.4 194.7 109.5 198.0 108.7 C201.2 108.0 204.6 107.4 210.0 106.5 C215.3 105.6 226.7 104.0 230.0 103.5 M182.2 108.3 C182.8 107.0 183.3 102.5 186.0 100.5 C188.6 98.4 196.0 96.7 198.0 96.0 M201.0 60.0 C201.1 62.0 201.2 68.5 201.7 72.0 C202.2 75.5 203.0 78.4 204.0 81.0 C205.0 83.6 206.7 86.2 207.7 87.7 C208.7 89.2 209.6 89.6 210.0 90.0 M111.8 129.0 C115.0 127.7 125.9 124.2 131.1 121.1 C136.4 118.0 140.5 114.1 143.5 110.5 C146.4 107.0 147.8 101.8 148.7 100.0 M111.8 139.0 C115.9 137.5 130.0 133.3 136.4 129.9 C142.9 126.4 147.8 122.3 150.5 118.5 C153.1 114.6 152.1 110.1 152.2 107.0 C152.4 104.0 151.5 101.2 151.4 100.0 M113.6 143.1 C115.0 142.6 117.4 142.0 122.4 140.4 C127.3 138.8 137.7 136.3 143.5 133.4 C149.2 130.5 153.6 127.2 156.6 122.8 C159.7 118.5 161.0 109.7 161.9 107.0 M113.6 147.5 C115.9 146.7 120.9 145.4 127.6 143.1 C134.4 140.7 147.8 137.3 154.0 133.4 C160.1 129.4 162.3 122.7 164.5 119.3 C166.7 116.0 166.7 114.2 167.2 113.2 M113.6 153.6 C116.5 152.9 122.9 150.5 131.1 149.2 C139.4 147.9 154.9 148.0 162.8 145.7 C170.7 143.4 174.8 139.3 178.6 135.1 C182.4 131.0 184.9 125.5 185.6 121.1 C186.4 116.7 183.4 110.8 183.0 108.8 M96.0 173.8 C100.1 172.9 111.8 171.2 120.6 168.5 C129.4 165.9 140.5 159.3 148.7 158.0 C156.9 156.7 162.2 161.5 169.8 160.6 C177.4 159.8 188.0 156.4 194.4 152.7 C200.9 149.1 207.3 143.1 208.5 138.7 C209.6 134.3 202.6 128.4 201.4 126.4 M115.3 100.0 C115.9 102.9 116.8 111.7 118.8 117.6 C120.9 123.4 125.6 130.9 127.6 135.1 C129.7 139.4 126.2 140.1 131.1 143.1 C136.1 146.0 151.1 149.8 157.5 152.7 C164.0 155.7 164.8 157.7 169.8 160.6 C174.8 163.6 178.0 167.2 187.4 170.3 C196.8 173.4 219.6 177.6 226.1 179.1 M88.4 166.2 C87.5 168.5 83.2 174.8 83.0 179.7 C82.7 184.7 84.5 190.1 87.0 195.9 C89.5 201.8 93.3 208.6 97.8 214.9 C102.3 221.2 108.6 227.9 114.1 233.8 C119.5 239.6 125.8 245.9 130.3 250.0 C134.8 254.1 139.3 256.8 141.1 258.1 M100.5 171.6 C99.6 173.9 95.4 179.7 95.1 185.1 C94.9 190.5 96.5 197.3 99.2 204.1 C101.9 210.8 106.6 218.9 111.4 225.7 C116.1 232.4 121.7 238.7 127.6 244.6 C133.4 250.5 140.6 256.3 146.5 260.8 C152.3 265.3 160.0 269.8 162.7 271.6 M120.8 169.5 C119.2 171.2 113.2 175.8 111.4 179.7 C109.5 183.7 109.5 188.3 110.0 193.2 C110.5 198.2 111.4 203.2 114.1 209.5 C116.8 215.8 121.3 224.3 126.2 231.1 C131.2 237.8 137.3 244.1 143.8 250.0 C150.3 255.9 158.6 261.7 165.4 266.2 C172.2 270.7 181.2 275.2 184.3 277.0 M141.1 182.4 C139.1 183.8 131.8 186.3 128.9 190.5 C126.0 194.8 123.3 201.8 123.5 208.1 C123.7 214.4 126.4 221.8 130.3 228.4 C134.1 234.9 140.2 241.0 146.5 247.3 C152.8 253.6 160.9 260.8 168.1 266.2 C175.3 271.6 183.4 276.1 189.7 279.7 C196.0 283.3 203.2 286.5 205.9 287.8 M184.3 183.8 C180.7 184.9 168.1 187.2 162.7 190.5 C157.3 193.9 153.2 199.1 151.9 204.1 C150.5 209.0 151.9 214.4 154.6 220.3 C157.3 226.1 162.7 232.9 168.1 239.2 C173.5 245.5 180.7 253.2 187.0 258.1 C193.3 263.1 200.1 265.8 205.9 268.9 C211.8 272.1 216.8 274.3 222.2 277.0 C227.6 279.7 235.7 283.8 238.4 285.1 M65.4 160.8 C67.9 161.5 76.4 164.0 80.3 164.9 C84.1 165.8 81.6 165.5 88.4 166.2 C95.1 167.0 112.0 166.8 120.8 169.5 C129.6 172.2 130.5 180.0 141.1 182.4 C151.7 184.8 170.8 184.0 184.3 183.8 C197.8 183.6 210.9 181.7 222.2 181.1 C233.4 180.5 246.9 180.4 251.9 180.3 M81.6 182.4 C83.9 182.9 90.3 183.8 95.1 185.1 C100.0 186.5 105.6 189.2 110.5 190.5 C115.5 191.9 119.8 192.6 124.9 193.2 C130.0 193.9 134.8 195.0 141.1 194.6 C147.4 194.1 159.1 191.2 162.7 190.5 M85.7 195.9 C87.9 197.3 94.5 201.8 99.2 204.1 C103.9 206.3 109.5 208.3 114.1 209.5 C118.6 210.6 119.9 211.0 126.2 210.8 C132.5 210.6 147.6 208.6 151.9 208.1 M96.5 214.9 C99.0 216.7 106.2 223.0 111.4 225.7 C116.5 228.4 122.6 230.0 127.6 231.1 C132.5 232.2 136.5 234.0 141.1 232.4 C145.7 230.9 152.8 223.4 155.1 221.6 M114.1 233.8 C116.3 235.6 122.5 241.9 127.6 244.6 C132.6 247.3 137.6 248.9 144.3 250.0 C151.1 251.1 161.0 250.0 168.1 251.4 C175.2 252.7 183.9 257.0 187.0 258.1 M305.4 196.5 C309.9 198.1 322.7 202.1 332.4 206.0 C342.1 209.9 354.3 216.1 363.5 220.0 C372.7 223.9 376.2 224.2 387.8 229.7 C399.4 235.2 418.5 244.8 433.2 253.2 C447.9 261.6 465.1 272.4 476.2 280.3 C487.3 288.2 492.4 292.1 500.0 300.5 C507.6 308.9 513.7 320.6 521.6 330.8 C529.5 341.0 538.3 349.8 547.3 361.9 C556.3 374.0 565.1 387.7 575.7 403.2 C586.3 418.7 604.9 446.5 610.8 455.1 M303.0 207.0 C307.2 208.5 319.2 212.2 328.4 216.0 C337.6 219.8 349.1 226.0 358.1 229.7 C367.1 233.4 370.9 233.3 382.4 238.4 C393.9 243.5 412.4 252.4 427.0 260.5 C441.6 268.6 458.5 279.1 469.7 287.0 C480.9 294.9 486.5 299.8 494.0 308.0 C501.5 316.2 507.1 326.1 514.9 336.2 C522.6 346.3 531.4 356.7 540.5 368.6 C549.6 380.5 558.0 393.4 569.7 407.8 C581.4 422.2 603.9 447.2 610.8 455.1 M340.5 176.2 C342.3 177.1 344.2 178.2 351.4 181.6 C358.6 185.0 373.4 191.8 383.8 196.5 C394.2 201.2 404.9 205.9 413.5 210.0 C422.1 214.1 424.8 215.0 435.1 220.8 C445.4 226.6 462.7 236.0 475.4 244.6 C488.1 253.2 498.0 259.4 511.1 272.2 C524.2 285.0 542.6 307.9 554.0 321.4 C565.4 334.9 570.7 341.0 579.7 353.0 C588.7 365.0 598.9 377.8 608.1 393.5 C617.3 409.2 629.7 434.9 635.1 447.0 C640.5 459.1 639.6 462.8 640.5 466.0 M332.4 206.0 C341.0 204.4 367.1 199.4 383.8 196.5 C400.5 193.6 424.3 189.8 432.4 188.4 M363.5 220.0 C371.8 218.3 397.5 212.9 413.5 210.0 C429.5 207.1 451.8 203.9 459.5 202.7 M387.8 229.7 C395.7 228.2 419.1 223.6 435.1 220.8 C451.1 218.0 475.7 214.0 483.8 212.7 M433.2 253.2 C440.2 251.8 461.9 247.4 475.4 244.6 C488.9 241.8 507.8 237.8 514.3 236.5 M476.2 280.3 C482.0 278.9 499.6 274.9 511.1 272.2 C522.6 269.5 539.5 265.5 545.2 264.1 M516.0 335.4 C516.9 334.6 515.3 333.1 521.6 330.8 C527.9 328.5 542.8 324.1 554.0 321.4 C565.2 318.7 583.2 315.6 589.0 314.5 M540.5 368.6 C541.6 367.5 540.8 364.5 547.3 361.9 C553.8 359.3 569.1 355.7 579.7 353.0 C590.3 350.3 605.6 346.9 610.8 345.7 M569.7 407.8 C570.7 407.0 569.3 405.6 575.7 403.2 C582.1 400.8 597.3 396.3 608.1 393.5 C618.9 390.7 635.1 387.4 640.5 386.2 M610.8 455.1 C614.8 453.8 627.4 449.7 635.1 447.0 C642.8 444.3 653.2 440.2 656.8 438.9 M301.4 196.0 C301.4 206.7 301.4 237.7 301.4 260.0 C301.4 282.3 301.4 318.3 301.4 330.0 M332.4 206.0 C331.9 207.8 329.9 206.5 329.2 216.8 C328.5 227.1 328.4 247.5 328.4 268.0 C328.4 288.5 329.1 328.0 329.2 340.0 M363.5 220.0 C362.6 221.6 359.1 221.7 358.1 229.7 C357.1 237.7 357.3 249.6 357.3 268.0 C357.3 286.4 358.0 328.0 358.1 340.0 M387.8 229.7 C387.5 231.6 386.3 232.3 385.9 241.0 C385.4 249.7 385.1 265.9 385.1 281.6 C385.1 297.3 385.8 326.1 385.9 335.0 M429.7 256.0 C429.2 256.8 427.7 254.9 427.0 260.5 C426.3 266.1 426.1 276.1 425.7 289.7 C425.2 303.3 424.5 333.3 424.3 342.0 M473.0 284.3 C472.4 284.8 470.9 283.4 469.7 287.0 C468.5 290.6 467.4 297.7 466.0 306.0 C464.6 314.3 462.1 329.3 461.0 337.0 C459.9 344.7 459.5 349.5 459.2 352.0 M516.0 335.4 C514.6 338.4 510.0 346.5 507.8 353.3 C505.6 360.1 503.8 372.2 503.0 376.0 M541.9 368.8 C540.8 371.6 537.0 380.8 535.4 385.7 C533.8 390.6 532.7 395.9 532.2 398.0 M571.1 407.7 C570.8 409.8 569.8 417.9 569.5 420.0 M280.0 232.0 C283.3 233.1 291.9 235.5 300.0 238.4 C308.1 241.3 318.8 245.8 328.4 249.2 C337.9 252.6 347.9 256.1 357.3 258.6 C366.8 261.1 373.7 260.6 385.1 264.0 C396.5 267.4 412.2 271.9 425.7 278.9 C439.2 285.9 452.3 293.6 466.0 306.0 C479.7 318.4 496.2 340.0 507.8 353.3 C519.4 366.6 526.8 376.0 535.4 385.7 C544.0 395.4 550.6 402.6 559.7 411.6 C568.8 420.7 585.0 435.3 590.0 440.0 M280.0 290.0 C283.3 290.9 291.9 293.4 300.0 295.1 C308.1 296.9 318.8 298.9 328.4 300.5 C337.9 302.1 347.9 303.5 357.3 304.6 C366.8 305.7 376.7 305.6 385.1 307.3 C393.6 309.0 398.9 310.4 408.0 315.0 C417.1 319.6 429.7 327.8 440.0 335.0 C450.3 342.2 465.0 354.2 470.0 358.0 M328.9 122.7 C330.2 125.2 334.4 133.4 336.5 137.8 C338.5 142.2 339.8 145.4 341.2 149.2 C342.6 153.0 344.2 157.7 345.0 160.5 C345.8 163.4 345.8 165.3 345.9 166.2 M315.7 117.0 C316.6 118.9 319.5 124.3 321.4 128.4 C323.2 132.5 325.1 137.2 327.0 141.6 C328.9 146.0 330.8 150.8 332.7 154.9 C334.6 159.0 336.8 163.4 338.4 166.2 C340.0 169.1 341.5 170.9 342.2 171.9 M328.9 123.6 C332.1 124.4 341.5 126.6 347.8 128.4 C354.1 130.1 362.0 131.5 366.8 134.1 C371.5 136.6 374.2 140.0 376.2 143.5 C378.3 147.0 379.4 151.7 379.1 154.9 C378.7 158.0 375.1 161.2 374.3 162.4 M353.5 126.5 C355.7 126.8 360.8 127.1 366.8 128.4 C372.7 129.6 382.5 131.5 389.5 134.1 C396.4 136.6 404.4 141.0 408.4 143.5 C412.3 146.0 412.3 148.2 413.1 149.2 M332.7 137.8 C335.2 138.0 342.2 138.3 347.8 138.8 C353.5 139.3 362.0 139.9 366.8 140.7 C371.5 141.5 374.6 143.0 376.2 143.5 M341.2 153.0 C343.6 153.6 350.0 155.3 355.4 156.8 C360.8 158.2 369.0 160.5 373.4 161.5 C377.8 162.4 380.5 162.3 381.9 162.4 M381.9 162.4 C382.5 161.5 383.5 158.3 385.7 156.8 C387.9 155.2 391.3 154.2 395.1 153.0 C398.9 151.8 405.4 148.9 408.4 149.6 C411.4 150.2 412.3 154.0 413.1 156.8 C413.9 159.5 413.7 162.4 413.1 166.2 C412.5 170.0 409.9 177.2 409.3 179.5 M408.4 149.6 C410.9 148.9 421.0 146.1 423.5 145.4 M413.1 156.8 C414.5 156.4 418.8 154.9 421.6 154.9 C424.5 154.9 428.7 156.4 430.1 156.8 M413.1 166.2 C414.8 166.5 420.8 167.5 423.5 168.1 C426.2 168.7 428.2 169.7 429.2 170.0 M409.3 179.5 C410.4 180.1 413.6 182.9 415.9 183.2 C418.3 183.6 422.2 181.7 423.5 181.3 M397.0 131.2 C398.3 132.3 402.1 136.3 404.6 137.8 C407.1 139.4 409.3 137.8 412.2 140.7 C415.0 143.5 419.7 150.3 421.6 154.9 C423.5 159.4 424.5 163.4 423.5 168.1 C422.6 172.8 417.2 180.7 415.9 183.2 M345.9 166.2 C348.2 166.8 354.5 170.6 359.2 170.0 C363.9 169.4 371.8 163.7 374.3 162.4 M338.4 175.7 C340.3 176.6 344.1 179.9 349.7 181.3 C355.4 182.8 366.4 184.2 372.4 184.2 C378.4 184.2 379.7 182.1 385.7 181.3 C391.7 180.6 404.6 179.8 408.4 179.5 M222.4 126.1 C223.2 127.5 224.2 131.1 226.8 134.7 C229.3 138.3 232.9 143.6 237.6 147.7 C242.3 151.8 248.4 156.2 254.9 159.6 C261.4 163.0 269.3 166.1 276.5 168.2 C283.7 170.4 290.9 171.7 298.1 172.6 C305.3 173.5 312.9 174.0 319.7 173.6 C326.6 173.3 335.9 170.9 339.2 170.4 M190.0 128.2 C192.2 130.4 198.3 136.5 203.0 141.2 C207.7 145.9 212.0 150.9 218.1 156.4 C224.2 161.8 231.8 169.3 239.7 173.6 C247.7 178.0 256.7 180.1 265.7 182.3 C274.7 184.5 284.8 185.9 293.8 186.6 C302.8 187.3 311.8 187.3 319.7 186.6 C327.7 185.9 337.7 183.0 341.4 182.3 M251.6 128.2 C252.2 130.4 254.7 137.3 254.9 141.2 C255.0 145.2 254.1 149.1 252.7 152.0 C251.3 154.9 247.3 157.4 246.2 158.5 M293.8 131.5 C294.5 133.8 298.5 140.7 298.1 145.5 C297.7 150.4 293.8 156.5 291.6 160.7 C289.5 164.8 286.2 168.8 285.1 170.4 M226.8 134.7 C231.4 135.8 243.0 139.4 254.9 141.2 C266.8 143.0 286.6 144.1 298.1 145.5 C309.6 147.0 319.7 149.1 324.1 149.9 M239.7 152.0 C237.9 153.5 232.5 160.0 228.9 160.7 C225.3 161.4 219.9 157.1 218.1 156.4 M261.4 169.3 C260.3 170.8 257.7 175.8 254.9 178.0 C252.0 180.1 245.9 181.6 244.1 182.3 M285.1 178.0 C284.8 179.4 283.3 185.2 283.0 186.6 M306.8 117.4 C308.2 119.2 312.5 123.9 315.4 128.2 C318.3 132.6 321.2 138.7 324.1 143.4 C326.9 148.1 330.2 151.8 332.7 156.4 C335.2 160.9 338.1 168.1 339.2 170.4 M307.8 110.9 C309.8 113.1 316.3 119.2 319.7 123.9 C323.2 128.6 325.5 134.0 328.4 139.1 C331.3 144.1 334.5 149.5 337.0 154.2 C339.5 158.9 342.4 165.0 343.5 167.2 M190.0 165.0 C193.6 166.1 202.6 169.0 211.6 171.5 C220.6 174.0 234.0 178.0 244.1 180.1 C254.1 182.3 267.5 183.7 272.2 184.5 M241.9 180.1 C242.1 183.0 242.6 192.6 243.0 197.4 C243.3 202.3 243.9 207.2 244.1 209.1 M177.8 208.1 C178.6 207.0 179.7 202.9 182.2 201.1 C184.7 199.3 188.1 198.3 192.8 197.6 C197.5 196.9 205.1 196.7 210.4 196.7 C215.6 196.7 220.3 196.6 224.4 197.6 C228.5 198.6 232.3 199.9 235.0 202.9 C237.6 205.8 238.8 210.2 240.3 215.2 C241.7 220.2 242.9 226.9 243.8 232.8 C244.7 238.6 245.1 246.0 245.5 250.4 C246.0 254.8 247.6 258.0 246.4 259.2 C245.2 260.3 242.2 258.9 238.5 257.4 C234.8 255.9 229.1 253.0 224.4 250.4 C219.7 247.7 215.1 244.8 210.4 241.6 C205.7 238.3 200.4 234.5 196.3 231.0 C192.2 227.5 188.5 223.4 185.7 220.5 C182.9 217.5 180.9 215.5 179.6 213.4 C178.3 211.4 178.1 209.0 177.8 208.1 M179.1 215.2 C181.3 214.6 187.8 213.4 192.8 211.7 C197.7 209.9 204.5 206.8 208.6 204.6 C212.7 202.4 215.9 199.5 217.4 198.5 M187.5 231.9 C189.4 231.6 193.4 231.3 198.9 230.1 C204.5 229.0 213.9 226.9 220.9 224.9 C228.0 222.8 237.8 219.0 241.1 217.8 M210.4 247.7 C212.0 247.0 214.2 244.8 220.0 243.7 C225.8 242.5 241.0 241.2 245.2 240.7 M191.0 199.3 C194.8 201.1 206.0 207.3 213.9 209.9 C221.8 212.5 234.4 214.3 238.5 215.2 M179.6 214.3 C182.8 216.9 192.2 225.2 198.9 230.1 C205.7 235.0 212.3 238.8 220.0 243.7 C227.8 248.5 241.3 256.6 245.5 259.2 M182.2 222.2 C184.9 224.9 192.8 233.9 198.0 238.0 C203.3 242.2 207.1 243.6 213.9 246.8 C220.6 250.1 234.4 255.6 238.5 257.4 M238.5 197.6 C239.7 200.5 243.8 207.9 245.5 215.2 C247.3 222.5 248.3 231.9 249.1 241.6 C249.8 251.2 249.7 266.7 249.9 273.2 C250.2 279.8 250.4 279.7 250.5 281.0 M245.5 195.8 C246.7 199.1 251.0 207.6 252.6 215.2 C254.2 222.8 254.9 232.8 255.2 241.6 C255.5 250.4 254.6 261.4 254.3 268.0 C254.0 274.5 253.6 278.8 253.5 281.0 M140.0 190.6 C142.5 190.6 149.1 191.4 155.0 190.6 C160.8 189.7 168.3 186.6 175.2 185.3 C182.1 184.0 187.5 183.2 196.3 182.6 C205.1 182.1 219.7 181.6 228.0 181.8 C236.2 181.9 240.0 182.1 245.5 183.5 C251.1 185.0 258.4 185.3 261.4 190.6 C264.3 195.8 263.1 205.2 263.1 215.2 C263.1 225.1 262.0 239.4 261.4 250.4 C260.8 261.3 259.9 275.9 259.6 281.0 M262.4 201.1 C269.2 201.5 291.7 202.4 303.0 203.8 C314.2 205.1 325.5 208.3 330.0 209.2 M259.7 230.8 C266.9 231.3 291.3 232.2 303.0 233.5 C314.7 234.9 325.5 238.0 330.0 238.9 M303.0 198.4 C302.8 204.2 301.9 220.7 301.9 233.5 C301.9 246.3 302.8 268.2 303.0 275.1" fill="none" stroke="#140303" stroke-width="1" stroke-opacity="0.92"/></g>
<path d="M57.0 96.5 C60.9 94.2 68.3 93.8 73.0 93.0 C77.7 92.2 81.7 93.5 85.4 92.0 C89.1 90.5 91.4 85.8 95.0 84.3 C98.6 82.8 103.0 82.5 107.0 83.0 C111.0 83.5 113.8 86.1 119.0 87.0 C124.2 87.9 133.0 89.1 138.0 88.4 C143.0 87.7 145.8 85.7 149.0 83.0 C152.2 80.3 154.0 76.2 157.0 72.0 C160.0 67.8 163.1 62.4 167.0 58.0 C170.9 53.6 176.0 48.5 180.5 45.7 C185.0 42.9 189.1 42.2 194.0 41.0 C198.9 39.8 203.7 38.7 210.0 38.4 C216.3 38.1 225.7 38.4 232.0 39.0 C238.3 39.6 243.8 40.4 248.0 42.0 C252.2 43.6 255.5 45.7 257.5 48.4 C259.5 51.1 259.8 54.2 260.0 58.0 C260.2 61.8 259.8 67.2 259.0 71.0 C258.2 74.8 256.5 78.2 255.0 81.0 C253.5 83.8 249.3 86.3 250.0 88.0 C250.7 89.7 254.8 90.0 259.0 91.0 C263.2 92.0 269.7 92.8 275.0 94.0 C280.3 95.2 286.5 96.3 291.0 98.0 C295.5 99.7 298.3 101.7 302.0 104.0 C305.7 106.3 309.8 109.2 313.0 112.0 C316.2 114.8 318.1 119.0 321.0 121.0 C323.9 123.0 325.3 123.7 330.5 124.0 C335.7 124.3 344.3 122.4 352.0 122.7 C359.7 123.0 369.3 124.6 376.5 126.0 C383.7 127.4 389.6 129.0 395.0 131.0 C400.4 133.0 404.5 135.5 409.0 138.0 C413.5 140.5 418.7 142.8 422.0 146.0 C425.3 149.2 427.8 153.2 429.0 157.0 C430.2 160.8 429.7 165.2 429.0 169.0 C428.3 172.8 426.3 177.0 425.0 180.0 C423.7 183.0 420.1 185.2 421.0 187.0 C421.9 188.8 427.3 189.4 430.5 191.0 C433.7 192.6 435.2 194.6 440.0 196.8 C444.8 199.0 451.8 200.7 459.0 204.0 C466.2 207.3 474.0 211.0 483.0 216.5 C492.0 222.0 503.1 228.9 513.0 236.8 C523.0 244.7 534.4 255.3 542.7 263.8 C551.0 272.3 556.3 279.7 563.0 288.0 C569.7 296.3 575.7 304.6 583.0 313.8 C590.3 323.1 599.7 334.3 607.0 343.5 C614.3 352.7 621.4 361.6 627.0 369.0 C632.6 376.4 636.7 381.6 640.5 388.0 C644.3 394.4 647.5 401.3 650.0 407.5 C652.5 413.7 654.3 420.1 655.4 425.4 C656.5 430.6 657.0 434.5 656.8 439.0 C656.6 443.5 655.6 448.6 654.0 452.4 C652.4 456.2 649.7 459.6 647.0 462.0 C644.3 464.4 641.3 466.2 638.0 467.0 C634.7 467.8 631.1 468.1 627.0 467.0 C622.9 465.9 618.0 463.4 613.5 460.5 C609.0 457.6 604.9 453.3 600.0 449.7 C595.1 446.1 589.0 442.6 584.0 439.0 C579.0 435.4 575.0 431.8 570.0 428.0 C565.0 424.2 558.9 420.0 554.0 416.0 C549.1 412.0 545.0 407.8 540.5 404.0 C536.0 400.2 531.5 396.4 527.0 393.0 C522.5 389.6 518.7 386.5 513.5 383.5 C508.3 380.5 501.9 378.1 496.0 375.0 C490.1 371.9 483.9 368.2 478.0 365.0 C472.1 361.8 466.9 359.0 460.5 356.0 C454.1 353.0 446.6 350.0 439.7 347.0 C432.8 344.0 426.4 340.4 419.0 338.0 C411.6 335.6 402.5 333.2 395.0 332.7 C387.5 332.2 380.9 333.9 374.0 335.0 C367.1 336.1 360.4 338.8 353.5 339.6 C346.6 340.4 339.1 340.1 332.7 339.6 C326.3 339.1 320.4 338.4 315.0 336.6 C309.6 334.8 303.7 330.9 300.0 329.0 C296.3 327.1 297.6 328.0 293.0 325.4 C288.4 322.8 279.5 317.0 272.7 313.6 C265.9 310.2 259.7 307.8 252.4 305.0 C245.1 302.2 236.7 299.5 228.8 296.7 C220.9 293.9 213.5 291.1 205.0 288.0 C196.5 284.9 186.4 281.3 178.0 278.0 C169.6 274.7 162.4 272.5 154.5 268.0 C146.6 263.5 138.1 256.7 130.8 251.0 C123.5 245.3 116.7 240.2 110.5 234.0 C104.3 227.8 98.1 220.2 93.6 214.0 C89.1 207.8 86.0 203.0 83.5 197.0 C81.0 191.0 79.1 182.5 78.4 178.0 C77.7 173.5 78.7 172.5 79.5 170.0 C80.3 167.5 82.1 164.9 83.5 163.0 C84.9 161.1 87.8 160.0 88.0 158.6 C88.2 157.2 87.9 157.0 85.0 154.6 C82.1 152.2 75.2 148.1 70.5 144.0 C65.8 139.9 60.4 134.3 57.0 130.0 C53.6 125.7 51.2 121.8 50.0 118.0 C48.8 114.2 48.3 110.6 49.5 107.0 C50.7 103.4 53.1 98.8 57.0 96.5Z" fill="none" stroke="#2a0606" stroke-width="0.8" stroke-opacity="0.7"/>
<ellipse cx="359.7" cy="133.3" rx="7" ry="7.6" fill="#868686"/><ellipse cx="359.7" cy="133.3" rx="5.6" ry="6.2" fill="#404040"/>
<ellipse cx="338.8" cy="152" rx="4.7" ry="8.4" fill="#929292" transform="rotate(-8 338.8 152)"/>
<ellipse cx="388.3" cy="199.8" rx="7.2" ry="2.8" fill="#7c7c7c" transform="rotate(-4 388.3 199.8)"/>
<line x1="310" y1="195.5" x2="309.7" y2="138" stroke="#3a1ec8" stroke-width="1.5"/><path d="M307 140 L312.6 140 L309.7 124.5Z" fill="#3030c8"/>
<line x1="310" y1="195.5" x2="358" y2="187" stroke="#28c830" stroke-width="1.2"/><path d="M357.5 183.6 L357.5 190.4 L371.5 184.6Z" fill="#1c7a28"/><ellipse cx="358" cy="187" rx="1.8" ry="3.6" fill="#30d838"/>
<line x1="310" y1="195.5" x2="337" y2="209" stroke="#e82020" stroke-width="1.2"/><path d="M333.8 210.8 L337.2 205.6 L347 213.8Z" fill="#f03030"/>
<rect x="301" y="186" width="19" height="19" fill="none" stroke="#78d8da" stroke-width="1.5"/>
<rect x="308.3" y="193.5" width="3.6" height="3.6" fill="#f0e040"/>
<path d="M175.3 37.6h3.3v3.3h-3.3zM207.4 34.2h3.3v3.3h-3.3zM238.8 31.9h3.3v3.3h-3.3zM264.8 37.6h3.3v3.3h-3.3zM157.7 48.1h3.3v3.3h-3.3zM199.6 43.7h3.3v3.3h-3.3zM232.7 41.0h3.3v3.3h-3.3zM258.1 48.8h3.3v3.3h-3.3zM208.1 53.8h3.3v3.3h-3.3zM232.7 51.5h3.3v3.3h-3.3zM211.8 79.8h3.3v3.3h-3.3zM234.4 77.5h3.3v3.3h-3.3zM233.8 82.5h3.3v3.3h-3.3zM206.4 85.9h3.3v3.3h-3.3zM238.5 92.7h3.3v3.3h-3.3zM256.4 74.8h3.3v3.3h-3.3zM258.1 82.5h3.3v3.3h-3.3zM262.1 79.8h3.3v3.3h-3.3zM93.2 80.2h3.3v3.3h-3.3zM98.6 79.5h3.3v3.3h-3.3zM105.0 79.2h3.3v3.3h-3.3zM83.1 90.0h3.3v3.3h-3.3zM101.0 92.7h3.3v3.3h-3.3zM55.4 94.4h3.3v3.3h-3.3zM50.3 100.4h3.3v3.3h-3.3zM66.2 104.5h3.3v3.3h-3.3zM59.8 111.3h3.3v3.3h-3.3zM44.2 117.3h3.3v3.3h-3.3zM80.0 118.0h3.3v3.3h-3.3zM54.4 125.8h3.3v3.3h-3.3zM90.2 129.2h3.3v3.3h-3.3zM83.1 135.6h3.3v3.3h-3.3zM61.1 134.2h3.3v3.3h-3.3zM68.9 136.6h3.3v3.3h-3.3zM93.2 141.0h3.3v3.3h-3.3zM70.6 142.7h3.3v3.3h-3.3zM78.0 148.4h3.3v3.3h-3.3zM93.2 148.4h3.3v3.3h-3.3zM87.5 152.8h3.3v3.3h-3.3zM94.9 154.2h3.3v3.3h-3.3zM79.0 163.6h3.3v3.3h-3.3zM86.8 164.6h3.3v3.3h-3.3zM67.9 176.1h3.3v3.3h-3.3zM75.6 177.8h3.3v3.3h-3.3zM142.2 82.5h3.3v3.3h-3.3zM150.6 86.6h3.3v3.3h-3.3zM160.1 86.6h3.3v3.3h-3.3zM149.3 96.7h3.3v3.3h-3.3zM159.4 95.0h3.3v3.3h-3.3zM148.3 106.2h3.3v3.3h-3.3zM159.4 104.8h3.3v3.3h-3.3zM146.6 116.3h3.3v3.3h-3.3zM165.2 111.3h3.3v3.3h-3.3zM181.1 106.9h3.3v3.3h-3.3zM196.3 107.2h3.3v3.3h-3.3zM200.6 124.8h3.3v3.3h-3.3zM223.3 119.7h3.3v3.3h-3.3zM242.9 121.4h3.3v3.3h-3.3zM250.3 126.5h3.3v3.3h-3.3zM118.9 167.0h3.3v3.3h-3.3zM139.8 180.5h3.3v3.3h-3.3zM182.1 181.5h3.3v3.3h-3.3zM174.3 194.0h3.3v3.3h-3.3zM131.4 193.0h3.3v3.3h-3.3zM100.3 192.3h3.3v3.3h-3.3zM122.3 207.5h3.3v3.3h-3.3zM156.7 210.9h3.3v3.3h-3.3zM177.0 205.8h3.3v3.3h-3.3zM181.4 201.8h3.3v3.3h-3.3zM187.1 199.8h3.3v3.3h-3.3zM249.6 178.8h3.3v3.3h-3.3zM270.6 172.1h3.3v3.3h-3.3zM252.3 192.3h3.3v3.3h-3.3zM292.9 93.2h3.3v3.3h-3.3zM307.3 94.6h3.3v3.3h-3.3zM322.9 108.6h3.3v3.3h-3.3zM304.6 110.0h3.3v3.3h-3.3zM327.0 120.2h3.3v3.3h-3.3zM289.7 124.3h3.3v3.3h-3.3zM291.6 131.1h3.3v3.3h-3.3zM317.5 151.3h3.3v3.3h-3.3zM368.1 117.5h3.3v3.3h-3.3zM375.4 123.8h3.3v3.3h-3.3zM394.6 128.3h3.3v3.3h-3.3zM421.6 138.3h3.3v3.3h-3.3zM429.7 147.3h3.3v3.3h-3.3zM408.1 147.3h3.3v3.3h-3.3zM412.7 156.7h3.3v3.3h-3.3zM440.2 156.7h3.3v3.3h-3.3zM407.3 164.3h3.3v3.3h-3.3zM410.8 168.3h3.3v3.3h-3.3zM426.2 167.5h3.3v3.3h-3.3zM406.7 177.5h3.3v3.3h-3.3zM354.0 159.4h3.3v3.3h-3.3zM371.6 159.4h3.3v3.3h-3.3zM338.4 173.5h3.3v3.3h-3.3zM340.5 177.5h3.3v3.3h-3.3zM348.4 180.2h3.3v3.3h-3.3zM430.8 187.0h3.3v3.3h-3.3zM458.1 200.5h3.3v3.3h-3.3zM478.9 210.8h3.3v3.3h-3.3zM484.3 216.2h3.3v3.3h-3.3zM434.3 218.9h3.3v3.3h-3.3zM411.9 208.9h3.3v3.3h-3.3zM381.6 195.1h3.3v3.3h-3.3zM331.6 204.0h3.3v3.3h-3.3zM326.2 214.3h3.3v3.3h-3.3zM304.6 202.1h3.3v3.3h-3.3zM361.9 218.9h3.3v3.3h-3.3zM355.9 227.5h3.3v3.3h-3.3zM386.2 227.5h3.3v3.3h-3.3zM512.7 235.1h3.3v3.3h-3.3zM517.5 239.2h3.3v3.3h-3.3zM542.4 263.5h3.3v3.3h-3.3zM547.0 267.0h3.3v3.3h-3.3zM473.5 243.2h3.3v3.3h-3.3zM509.4 271.6h3.3v3.3h-3.3zM474.8 278.9h3.3v3.3h-3.3zM468.6 285.1h3.3v3.3h-3.3zM582.4 312.7h3.3v3.3h-3.3zM587.0 315.6h3.3v3.3h-3.3zM551.9 320.2h3.3v3.3h-3.3zM520.2 328.4h3.3v3.3h-3.3zM513.2 334.6h3.3v3.3h-3.3zM608.6 343.2h3.3v3.3h-3.3zM613.2 346.7h3.3v3.3h-3.3zM578.1 351.3h3.3v3.3h-3.3zM545.6 360.2h3.3v3.3h-3.3zM538.9 367.0h3.3v3.3h-3.3zM638.1 382.7h3.3v3.3h-3.3zM639.7 384.6h3.3v3.3h-3.3zM606.5 391.9h3.3v3.3h-3.3zM574.0 401.6h3.3v3.3h-3.3zM568.1 406.2h3.3v3.3h-3.3zM521.3 406.2h3.3v3.3h-3.3zM558.4 436.5h3.3v3.3h-3.3zM657.3 437.3h3.3v3.3h-3.3zM668.1 448.6h3.3v3.3h-3.3zM633.5 445.4h3.3v3.3h-3.3zM608.6 453.5h3.3v3.3h-3.3zM638.1 464.3h3.3v3.3h-3.3zM608.6 468.4h3.3v3.3h-3.3zM637.0 471.6h3.3v3.3h-3.3zM432.1 251.7h3.3v3.3h-3.3zM426.2 258.6h3.3v3.3h-3.3zM327.2 319.2h3.3v3.3h-3.3zM356.3 320.1h3.3v3.3h-3.3zM382.2 319.5h3.3v3.3h-3.3zM382.5 337.0h3.3v3.3h-3.3zM420.2 331.4h3.3v3.3h-3.3zM419.6 344.8h3.3v3.3h-3.3zM356.9 341.8h3.3v3.3h-3.3zM327.5 344.5h3.3v3.3h-3.3zM306.7 348.3h3.3v3.3h-3.3zM455.9 358.7h3.3v3.3h-3.3zM495.1 384.9h3.3v3.3h-3.3zM304.3 318.6h3.3v3.3h-3.3zM76.8 170.0h3.3v3.3h-3.3zM103.1 233.6h3.3v3.3h-3.3zM118.3 269.0h3.3v3.3h-3.3zM141.7 272.4h3.3v3.3h-3.3zM169.7 274.1h3.3v3.3h-3.3zM194.4 280.5h3.3v3.3h-3.3zM206.2 264.6h3.3v3.3h-3.3zM233.9 302.5h3.3v3.3h-3.3zM255.8 320.4h3.3v3.3h-3.3zM244.0 257.9h3.3v3.3h-3.3zM248.4 272.4h3.3v3.3h-3.3zM249.1 278.1h3.3v3.3h-3.3zM254.2 288.3h3.3v3.3h-3.3z" fill="#fbfbfb" stroke="#2a2a2a" stroke-width="0.7" stroke-opacity="0.85"/>
<rect x="738" y="3" width="2" height="571" fill="#b8b8b8"/>
</svg>
<style>
.t8{font-size:8px;line-height:10px;color:#0c0c0c;white-space:pre;position:absolute;letter-spacing:0;transform:scaleY(1.12);transform-origin:0 78%}
.btn{position:absolute;background:#d6d3cb;box-sizing:border-box;border-top:1px solid #fbfbf8;border-left:1px solid #fbfbf8;border-right:1px solid #55534e;border-bottom:1px solid #55534e;box-shadow:inset -1px -1px 0 #8d8a84;font-size:8px;line-height:10px;color:#1a1a1a;text-align:center}
.btn span{position:absolute;left:0;right:0;text-align:center;transform:scaleY(1.12);transform-origin:50% 78%}
u{text-decoration:underline;text-underline-offset:1px;text-decoration-thickness:0.7px}
</style>
<div class="abs" style="left:0;top:0;width:740px;height:2px;background:#cfccc2"></div>
<div class="abs" style="left:0;top:2px;width:740px;height:0.6px;background:#9a9894;opacity:.6"></div>
<div class="abs" style="left:356px;top:0;width:2px;height:2px;background:#333"></div>
<div class="abs" style="left:380px;top:0;width:2px;height:2px;background:#333"></div>
<div class="abs" style="left:390px;top:0.5px;width:15px;height:1.5px;background:#222"></div>
<div class="abs" style="left:119px;top:0;width:1px;height:2px;background:#666"></div>
<div class="abs" style="left:214px;top:0;width:3px;height:2px;background:#777"></div>
<div class="abs" style="left:542px;top:0;width:1.5px;height:2px;background:#333"></div>
<div class="abs" style="left:590px;top:0;width:1.5px;height:2px;background:#333"></div>
<div class="abs" style="left:505px;top:0;width:1.5px;height:2px;background:#444"></div>
<div class="abs" style="left:672px;top:0;width:14px;height:2px;background:#e8b8e0"></div>
<div class="abs" style="left:0;top:2px;width:69px;height:13px;background:#0a246a;overflow:hidden"><span style="position:absolute;left:5px;top:0px;font-size:10.3px;line-height:12px;font-weight:700;color:#fff;white-space:pre">Perspective</span></div>
<div class="abs" style="left:4px;top:-1px;width:38.3px;height:8.9px;box-sizing:border-box;background:#ffffe1;border:1px solid #3a3a30;overflow:hidden"><span style="position:absolute;left:3.6px;top:-1.8px;width:6.4px;height:6.4px;border-radius:50%;border:1.3px solid #222;box-sizing:border-box"></span><span class="t8" style="left:13px;top:-2.5px;color:#111;transform:none">Export</span></div>

<div class="abs" style="left:637px;top:10px;width:95px;height:52px;background:#cbcbcb"></div>
<div class="t8" style="left:640.7px;top:15.6px">Translate</div>
<div class="t8" style="left:640.7px;top:27.2px">Mode:  Verts</div>
<div class="t8" style="left:640.7px;top:38.5px">Selection</div>
<div class="t8" style="left:650px;top:49.8px">T-Spline vertices:</div>

<div class="abs" style="left:27px;top:522px;width:6px;height:26px;border-left:1px solid #bdbdbd;border-top:1px solid #b4b4b4;border-bottom:1px solid #b4b4b4;box-sizing:border-box;opacity:.8"></div>
<div class="abs" id="dlg" style="left:32px;top:384px;width:89px;height:172.5px;background:#d6d3cb;box-sizing:border-box;border-top:1px solid #e4e1da;border-left:1px solid #e4e1da;border-right:1px solid #4a4844;border-bottom:1px solid #4a4844;box-shadow:inset 1px 1px 0 #fff, inset -1px -1px 0 #86837d;overflow:hidden"></div>
<div class="abs" style="left:34px;top:386px;width:84.5px;height:12px;background:linear-gradient(90deg,#848484,#a9a9a9 60%,#c6c6c6)"></div>
<div class="t8" style="left:36.5px;top:387.2px;font-size:8.3px;font-weight:700;color:#d9d6cf">EMap Options</div>
<div class="abs" style="left:108.3px;top:387.2px;width:8.4px;height:8px;background:#d4d0c8;box-sizing:border-box;border-top:1px solid #fff;border-left:1px solid #fff;border-right:1px solid #404040;border-bottom:1px solid #404040"><svg width="7" height="6" style="left:0;top:0" viewBox="0 0 7 6"><path d="M1.2 0.8L5.4 5M5.4 0.8L1.2 5" stroke="#000" stroke-width="1.3" fill="none"/></svg></div>
<div class="t8" style="left:37px;top:401.6px">Environment map</div>
<div class="abs" style="left:100px;top:404.6px;width:13.5px;height:1px;background:#8a8782;border-bottom:1px solid #f4f2ee"></div>
<div class="abs" style="left:43px;top:415px;width:69px;height:14px;background:#fff;box-sizing:border-box;border-top:1px solid #6c6a66;border-left:1px solid #6c6a66;border-right:1px solid #f2f0ec;border-bottom:1px solid #f2f0ec;box-shadow:inset 1px 1px 0 #3c3b39;overflow:hidden"><span class="t8" style="left:2.2px;top:2.4px;color:#000">...\Aux_CarPaint</span><span style="position:absolute;right:1px;top:1px;width:10px;height:11px;background:#d4d0c8;box-sizing:border-box;border-top:1px solid #fff;border-left:1px solid #fff;border-right:1px solid #404040;border-bottom:1px solid #404040"><svg width="8" height="9" viewBox="0 0 8 9" style="left:0;top:0"><path d="M1.6 3.2h5L4.1 5.9z" fill="#000"/></svg></span></div>
<div class="btn" style="left:43px;top:432px;width:70px;height:16.5px"><span style="top:3.6px"><u>B</u>rowse...</span></div>
<div class="abs" style="left:43px;top:458px;width:9.5px;height:9.5px;background:#fff;box-sizing:border-box;border-top:1px solid #6c6a66;border-left:1px solid #6c6a66;border-right:1px solid #f2f0ec;border-bottom:1px solid #f2f0ec;box-shadow:inset 1px 1px 0 #3c3b39"><svg width="8" height="8" viewBox="0 0 8 8" style="left:0.5px;top:0.5px"><path d="M1.8 3.6L3.4 5.4L6.3 1.8" stroke="#000" stroke-width="1.4" fill="none"/></svg></div>
<div class="abs" style="left:56.7px;top:458.4px;width:56.3px;height:11px;overflow:hidden"><span class="t8" style="left:0;top:0">Blend <u>w</u>ith objects</span></div>
<div class="abs" style="left:43px;top:469.6px;width:9.5px;height:9.5px;background:#fff;box-sizing:border-box;border-top:1px solid #6c6a66;border-left:1px solid #6c6a66;border-right:1px solid #f2f0ec;border-bottom:1px solid #f2f0ec;box-shadow:inset 1px 1px 0 #3c3b39"></div>
<div class="t8" style="left:56.7px;top:470.2px"><u>S</u>how isocurve</div>
<div class="abs" style="left:41px;top:484.4px;width:72.5px;height:1px;background:#8a8782;border-bottom:1px solid #f4f2ee"></div>
<div class="btn" style="left:43px;top:491.8px;width:69.8px;height:15.8px"><span style="top:3px">A<u>d</u>just Mesh...</span></div>
<div class="abs" style="left:42.2px;top:509px;width:71.4px;height:17.4px;background:#1c1c1c"></div>
<div class="btn" style="left:43.2px;top:510px;width:69.4px;height:15.4px"><span style="top:2.6px">Add Objects</span></div>
<div class="btn" style="left:43px;top:528px;width:69.8px;height:15.8px"><span style="top:2.8px">Remove Objects</span></div>

</body></html>
